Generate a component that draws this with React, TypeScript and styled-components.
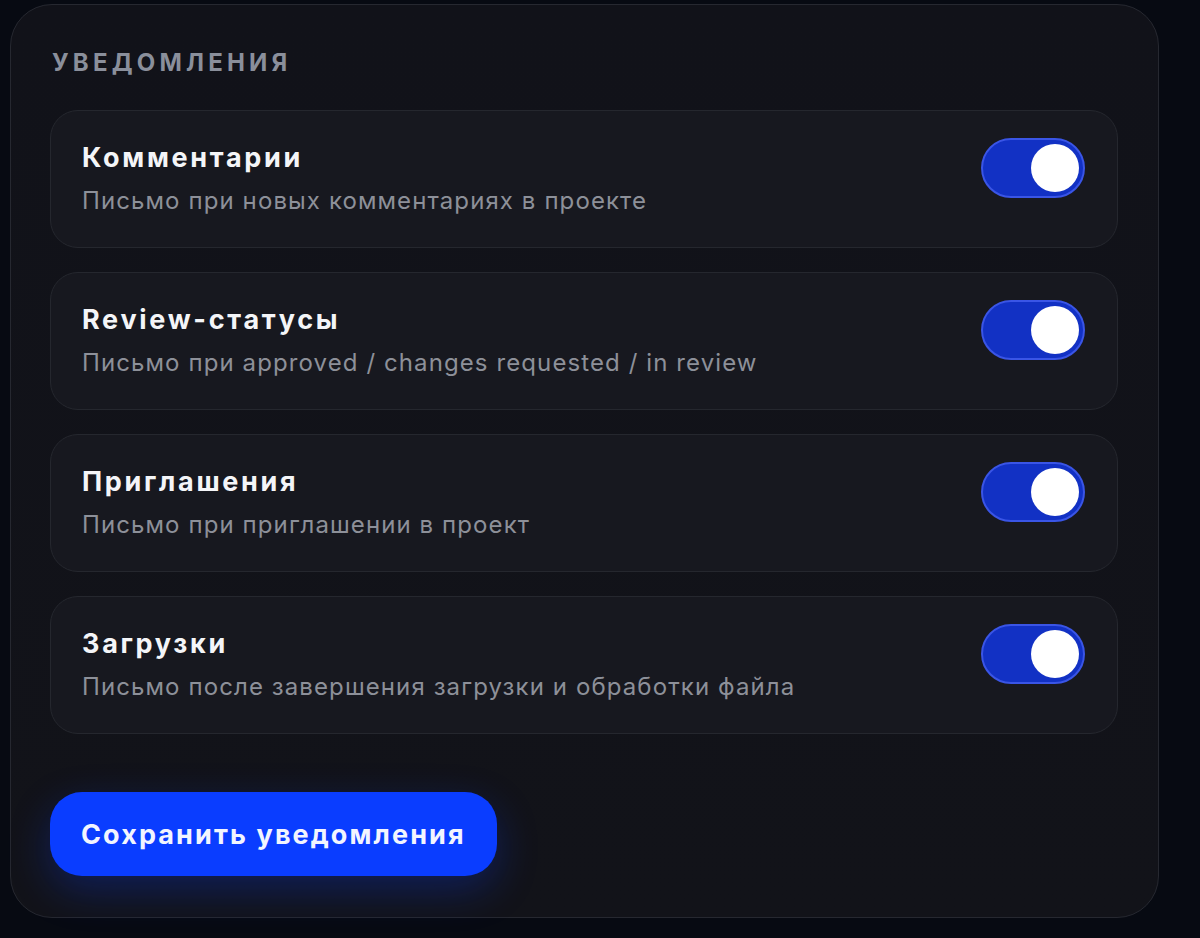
import React, { useState } from "react";
import styled, { createGlobalStyle } from "styled-components";

const GlobalStyle = createGlobalStyle`
    html, body {
        margin: 0;
        padding: 0;
        background: #070a12;
        font-family: Inter, "Noto Sans", sans-serif;
        -webkit-font-smoothing: antialiased;
    }
    * {
        box-sizing: border-box;
    }
`;

const Page = styled.div`
    width: 1200px;
    height: 938px;
    padding: 4px 41px 20px 10px;
    background: #070a12;
`;

const Panel = styled.section`
    height: 914px;
    padding: 42px 40px 42px 39px;
    border: 1.5px solid #262830;
    border-radius: 42px;
    background: linear-gradient(180deg, #111219 0%, #121319 100%);
    display: flex;
    flex-direction: column;
`;

const Heading = styled.h2`
    margin: 0 0 31px 2px;
    font-size: 24px;
    font-weight: 700;
    letter-spacing: 4.2px;
    line-height: 32px;
    text-transform: uppercase;
    color: #8a8f9b;
`;

const List = styled.div`
    display: flex;
    flex-direction: column;
    gap: 24px;
`;

const Row = styled.div`
    height: 138px;
    padding: 0 32px 0 31px;
    border: 1.5px solid #25272e;
    border-radius: 28px;
    background: #17181f;
    display: flex;
    align-items: center;
    justify-content: space-between;
`;

const Texts = styled.div`
    display: flex;
    flex-direction: column;
    gap: 12px;
`;

const Title = styled.div`
    font-size: 27px;
    font-weight: 700;
    letter-spacing: 2.7px;
    line-height: 32px;
    color: #f4f5f8;
`;

const Description = styled.div`
    font-size: 24px;
    font-weight: 400;
    letter-spacing: 1.1px;
    line-height: 30px;
    color: #8d9099;
`;

const Track = styled.button<{ $on: boolean }>`
    position: relative;
    width: 104px;
    height: 60px;
    padding: 0;
    margin-top: -22px;
    border: 2px solid ${p => (p.$on ? "#3a55e6" : "#3a3c45")};
    border-radius: 30px;
    background: ${p => (p.$on ? "#1231c4" : "#2a2c35")};
    cursor: pointer;
    flex-shrink: 0;
`;

const Knob = styled.span<{ $on: boolean }>`
    position: absolute;
    top: 4px;
    left: ${p => (p.$on ? "48px" : "4px")};
    width: 48px;
    height: 48px;
    border-radius: 50%;
    background: #ffffff;
    transition: left 0.2s;
`;

const Footer = styled.div`
    margin-top: 58px;
`;

const SaveButton = styled.button`
    height: 84px;
    padding: 0 31px;
    border: none;
    border-radius: 32px;
    background: #0a3dff;
    color: #f2f5ff;
    font-family: Inter, "Noto Sans", sans-serif;
    font-size: 27px;
    font-weight: 700;
    letter-spacing: 2.1px;
    box-shadow: 0 14px 40px rgba(10, 61, 255, 0.28);
    cursor: pointer;
`;

const items = [
    { title: "Комментарии", text: "Письмо при новых комментариях в проекте" },
    { title: "Review-статусы", text: "Письмо при approved / changes requested / in review" },
    { title: "Приглашения", text: "Письмо при приглашении в проект" },
    { title: "Загрузки", text: "Письмо после завершения загрузки и обработки файла" },
];

export default function App() {
    const [enabled, setEnabled] = useState<boolean[]>([true, true, true, true]);
    const toggle = (i: number) => setEnabled(prev => prev.map((v, j) => (j === i ? !v : v)));
    return (
        <Page>
            <GlobalStyle />
            <Panel>
                <Heading>Уведомления</Heading>
                <List>
                    {items.map((item, i) => (
                        <Row key={item.title}>
                            <Texts>
                                <Title>{item.title}</Title>
                                <Description>{item.text}</Description>
                            </Texts>
                            <Track $on={enabled[i]} onClick={() => toggle(i)} aria-pressed={enabled[i]}>
                                <Knob $on={enabled[i]} />
                            </Track>
                        </Row>
                    ))}
                </List>
                <Footer>
                    <SaveButton>Сохранить уведомления</SaveButton>
                </Footer>
            </Panel>
        </Page>
    );
}
